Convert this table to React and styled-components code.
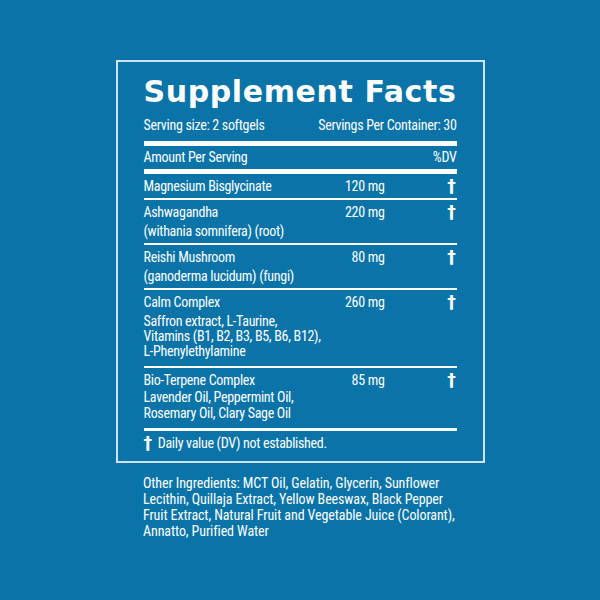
import React from "react";
import styled, { createGlobalStyle } from "styled-components";

const GlobalStyle = createGlobalStyle`
  html, body {
    margin: 0;
    padding: 0;
    background: #0a74a8;
  }
  body {
    width: 600px;
    height: 600px;
    overflow: hidden;
  }
`;

const Page = styled.div`
  width: 600px;
  height: 600px;
  box-sizing: border-box;
  padding-top: 60px;
  display: flex;
  flex-direction: column;
  align-items: center;
  color: #ffffff;
  font-family: "Roboto Condensed", Roboto, sans-serif;
  font-size: 14px;
  letter-spacing: -0.3px;
`;

const Panel = styled.div`
  width: 369px;
  box-sizing: border-box;
  border: 2px solid #cfe4ef;
  padding: 12px 26px 10px 26px;
  display: flex;
  flex-direction: column;
`;

const Title = styled.div`
  font-family: "DejaVu Sans", Inter, sans-serif;
  font-weight: 700;
  font-size: 30px;
  line-height: 36px;
  letter-spacing: 0.6px;
  white-space: nowrap;
`;

const SplitRow = styled.div`
  display: flex;
  justify-content: space-between;
  line-height: 16px;
  padding: ${(p) => p.$pad || "0"};
`;

const Rule = styled.div`
  height: ${(p) => p.$h || 2}px;
  background: #ffffff;
  margin: ${(p) => p.$m || "0"};
`;

const Item = styled.div`
  display: grid;
  grid-template-columns: 1fr 60px 72px;
  padding: ${(p) => p.$pad};
  line-height: 16px;
`;

const Name = styled.div`
  display: flex;
  flex-direction: column;
`;

const Sub = styled.div`
  margin-top: ${(p) => p.$gap}px;
  line-height: ${(p) => p.$lh}px;
`;

const Amount = styled.div`
  text-align: right;
`;

const Dagger = styled.div`
  text-align: right;
  padding-right: 1px;
  font-family: "DejaVu Sans", sans-serif;
  font-weight: 700;
  font-size: 17px;
`;

const Footnote = styled.div`
  line-height: 16px;
  padding-top: 4px;
  display: flex;
  gap: 6px;
  span:first-child {
    font-family: "DejaVu Sans", sans-serif;
    font-weight: 700;
    font-size: 17px;
  }
`;

const Other = styled.p`
  width: 316px;
  margin: 12px 0 0 0;
  padding-left: 2px;
  line-height: 16px;
  letter-spacing: -0.1px;
`;

const items = [
  { name: "Magnesium Bisglycinate", amount: "120 mg", pad: "4px 0 4px 0" },
  {
    name: "Ashwagandha",
    amount: "220 mg",
    pad: "4px 0 4px 0",
    gap: 3,
    lh: 16,
    sub: ["(withania somnifera) (root)"],
  },
  {
    name: "Reishi Mushroom",
    amount: "80 mg",
    pad: "4px 0 4px 0",
    gap: 3,
    lh: 16,
    sub: ["(ganoderma lucidum) (fungi)"],
  },
  {
    name: "Calm Complex",
    amount: "260 mg",
    pad: "4px 0 7.5px 0",
    gap: 3.5,
    lh: 15,
    sub: ["Saffron extract, L-Taurine,", "Vitamins (B1, B2, B3, B5, B6, B12),", "L-Phenylethylamine"],
  },
  {
    name: "Bio-Terpene Complex",
    amount: "85 mg",
    pad: "4px 0 7px 0",
    gap: 1,
    lh: 16,
    sub: ["Lavender Oil, Peppermint Oil,", "Rosemary Oil, Clary Sage Oil"],
  },
];

const App = () => {
  return (
    <Page>
      <GlobalStyle />
      <Panel>
        <Title>Supplement Facts</Title>
        <SplitRow $pad="7px 0 0 0">
          <span>Serving size: 2 softgels</span>
          <span>Servings Per Container: 30</span>
        </SplitRow>
        <Rule $h={5} $m="8px 0 0 0" />
        <SplitRow $pad="3px 0 4px 0">
          <span>Amount Per Serving</span>
          <span>%DV</span>
        </SplitRow>
        <Rule $h={5} />
        {items.map((it, i) => (
          <React.Fragment key={it.name}>
            {i > 0 && <Rule />}
            <Item $pad={it.pad}>
              <Name>
                <span>{it.name}</span>
                {it.sub && (
                  <Sub $gap={it.gap} $lh={it.lh}>
                    {it.sub.map((s) => (
                      <div key={s}>{s}</div>
                    ))}
                  </Sub>
                )}
              </Name>
              <Amount>{it.amount}</Amount>
              <Dagger>†</Dagger>
            </Item>
          </React.Fragment>
        ))}
        <Rule $h={3} />
        <Footnote>
          <span>†</span>
          <span>Daily value (DV) not established.</span>
        </Footnote>
      </Panel>
      <Other>
        Other Ingredients: MCT Oil, Gelatin, Glycerin, Sunflower Lecithin, Quillaja Extract, Yellow Beeswax,
        Black Pepper Fruit Extract, Natural Fruit and Vegetable Juice (Colorant), Annatto, Purified Water
      </Other>
    </Page>
  );
};

export default App;
